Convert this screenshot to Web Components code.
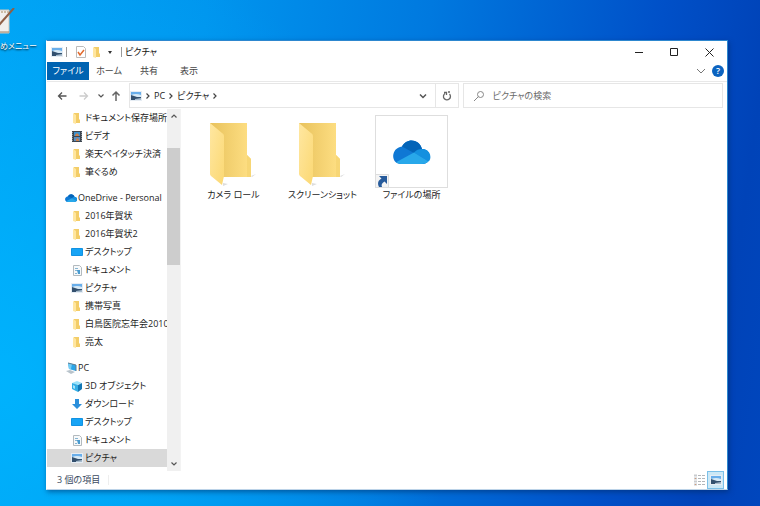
<!DOCTYPE html>
<html lang="ja">
<head>
<meta charset="utf-8">
<title>ピクチャ</title>
<style>
body { margin: 0; font: 9px/12px "Open Sans", "Noto Sans CJK JP", sans-serif; font-feature-settings: "palt"; color: #1c1c1c; }
</style>
</head>
<body>
<fe-desktop>
  <fe-shortcut slot="icons">めメニュー</fe-shortcut>
  <fe-window>
    <fe-titlebar slot="top">ピクチャ</fe-titlebar>
    <fe-ribbon slot="top"></fe-ribbon>
    <fe-addressbar slot="top"></fe-addressbar>
    <fe-tree slot="side">
      <fe-node icon="folder">ドキュメント保存場所変</fe-node>
      <fe-node icon="video">ビデオ</fe-node>
      <fe-node icon="folder">楽天ペイタッチ決済</fe-node>
      <fe-node icon="folder">筆ぐるめ</fe-node>
      <fe-node icon="cloud" root>OneDrive - Personal</fe-node>
      <fe-node icon="folder">2016年賀状</fe-node>
      <fe-node icon="folder">2016年賀状2</fe-node>
      <fe-node icon="desktop">デスクトップ</fe-node>
      <fe-node icon="doc">ドキュメント</fe-node>
      <fe-node icon="picture">ピクチャ</fe-node>
      <fe-node icon="folder">携帯写真</fe-node>
      <fe-node icon="folder">白鳥医院忘年会2010</fe-node>
      <fe-node icon="folder">亮太</fe-node>
      <fe-node icon="pc" root>PC</fe-node>
      <fe-node icon="cube">3D オブジェクト</fe-node>
      <fe-node icon="down">ダウンロード</fe-node>
      <fe-node icon="desktop">デスクトップ</fe-node>
      <fe-node icon="doc">ドキュメント</fe-node>
      <fe-node icon="picture" selected>ピクチャ</fe-node>
      <fe-node icon="video"></fe-node>
    </fe-tree>
    <fe-tile icon="bigfolder">カメラ ロール</fe-tile>
    <fe-tile icon="bigfolder">スクリーンショット</fe-tile>
    <fe-tile icon="bigcloud" framed>ファイルの場所</fe-tile>
    <fe-statusbar slot="bottom">3 個の項目</fe-statusbar>
  </fe-window>
</fe-desktop>

<script>
const picture = `<path d="M0 1h12v10H0z" fill="#e6edf4"/><path d="M1 2h10v4H1z" fill="#69aeea"/><path d="M1 5q5-2 10 0v2H1z" fill="#d6e9f6"/><path d="M1 5l3 1 3 1 4 0v3H1z" fill="#33506e"/><path d="M5 9l6-1v2H5z" fill="#a8bccd"/>`;
const cloud = `<path d="M8 24C-2.500 24-2.500 8 9 6.500 13-2 26-2 29 9c9-1 11 15 0 15z" fill="#0f78d4"/><path d="M9 6.500C13-2 26-2 29 9l-8 4z" fill="#0364b8"/><path d="M29 9c9 0 10 10 6.500 12.500L21 12.500C23 10 26 9 29 9z" fill="#1490df"/><path d="M3 22.300l18-9.800 14.500 9C34 23 32 24 29 24H8c-2 0-4-1-5-1.700z" fill="#28a8ea"/>`;
const ICONS = {
  picture: [12, 12, picture],
  folder: [12, 12, `<path d="M3 1h5v6l1 1v3H3z" fill="#f3cd68"/><path d="M2 1l3 2v9l-3-1z" fill="#ffe6a0"/>`],
  desktop: [12, 12, `<path d="M.5 2.500h11v7H.5z" fill="#18a4f5" stroke="#1292e2"/>`],
  doc: [12, 12, `<path d="M2.500 1.500h6l2 2v8h-8z" fill="#f7f9fa" stroke="#b3babe"/><path d="M4 4h3v1H4zM4 6h5v1H4zM4 9h2v1H4z" fill="#86b5d2"/><path d="M6 6h3v4H7z" fill="#4a9bd0"/>`],
  video: [12, 12, `<path d="M1 1h10v11H1z" fill="#3d4650"/><path d="M3 2h6v4H3z" fill="#3b91cf"/><path d="M3 7h6v4H3z" fill="#5b8fc0"/><path d="M4 5l2-2 2 2v1H4zM5 9l2-1 1 2v1H5z" fill="#c9804f"/><path d="M1.500 2v10M10.500 2v10" stroke="#8b949b" stroke-dasharray="1 1"/>`],
  cloud: [12, 12, `<g transform="translate(0 2) scale(.33)">${cloud}</g>`],
  pc: [12, 12, `<path d="M3 1l8 2v6L4 7z" fill="#2aa5e8"/><path d="M3 1l4 1-1 5-2 0z" fill="#75ccf4"/><path d="M1 9l4-1 5 2-4 2z" fill="#b8c3cb"/><path d="M3 1l8 2v6" fill="none" stroke="#5c7c92"/>`],
  cube: [12, 12, `<path d="M1 3l5-2 5 2-5 2z" fill="#9be3fa"/><path d="M1 3l6 2v7l-6-3z" fill="#34aee5"/><path d="M7 5l4-2v6l-4 3z" fill="#1478b5"/><path d="M2 5l2 1v3l-2-1z" fill="#a7e5fa"/>`],
  down: [12, 12, `<path d="M4 1h4v5h3l-5 5-5-5h3z" fill="#2b8fdb"/>`],
  check: [12, 12, `<path d="M1.500.5h7l2 2v9h-9z" fill="#fff" stroke="#bbb"/><path d="M3 6l2 3 4-5" fill="none" stroke="#e2692c" stroke-width="1.500"/>`],
  tri: [6, 12, `<path d="M1 5h4L3 8z" fill="#333"/>`],
  back: [10, 12, `<path d="M9.500 6h-8M5 2.500L1.500 6 5 9.500" fill="none" stroke="#555" stroke-width="1.300"/>`],
  fwd: [10, 12, `<path d="M.5 6h8M5 2.500L8.500 6 5 9.500" fill="none" stroke="#ccc" stroke-width="1.300"/>`],
  up: [10, 12, `<path d="M5 11V2M1.500 5.500L5 2l3.500 3.500" fill="none" stroke="#666" stroke-width="1.500"/>`],
  chev: [8, 12, `<path d="M1.500 4.500L4 7l2.500-2.500" fill="none" stroke="#555" stroke-width="1.200"/>`],
  chevbig: [10, 12, `<path d="M1 4l4 4 4-4" fill="none" stroke="#777"/>`],
  chevaddr: [8, 12, `<path d="M1 4.500L4 7.500l3-3" fill="none" stroke="#555" stroke-width="1.500"/>`],
  scup: [8, 12, `<path d="M1.500 7.500L4 5l2.500 2.500" fill="none" stroke="#555" stroke-width="1.200"/>`],
  right: [6, 12, `<path d="M1.500 3.500L4 6 1.500 8.500" fill="none" stroke="#444" stroke-width="1.200"/>`],
  refresh: [10, 12, `<path d="M3 3.500A3.500 3.500 0 1 0 7.500 4M2 2.500h2.500V5M6 2h2" fill="none" stroke="#666" stroke-width="1.300"/>`],
  search: [12, 12, `<circle cx="7.500" cy="4.500" r="3" fill="none" stroke="#888"/><path d="M5.500 6.500L1 11" stroke="#888"/>`],
  min: [9, 12, `<path d="M0 6.500h8" stroke="#222"/>`],
  max: [9, 12, `<path d="M.5 2.500h7v7h-7z" fill="none" stroke="#222"/>`],
  close: [9, 12, `<path d="M.5 2.500l8 8M8.500 2.500l-8 8" stroke="#222"/>`],
  list: [12, 12, `<path d="M1 1.500h3M1 4.500h3M1 7.500h3M1 10.500h3" stroke="#c9cccf" stroke-width="2"/><path d="M2 4h1v1H2zM2 10h1v1H2z" fill="#d59a76"/><path d="M5 1.500h3M9 1.500h3M5 4.500h3M9 4.500h3M5 7.500h3M9 7.500h3M5 10.500h3M9 10.500h3" stroke="#b2b6ba"/>`],
  bigfolder: [73, 73, `<defs><linearGradient id="b"><stop stop-color="#e8c25c"/><stop offset="1" stop-color="#ffe085"/></linearGradient><linearGradient id="f" y2="1"><stop stop-color="#ffe7a1"/><stop offset="1" stop-color="#fbd873"/></linearGradient></defs><path d="M54 61l5-2-4 3zM26 68l5 1-5 2z" fill="#ddd"/><path d="M13 8h37v32l4 4v18H20z" fill="url(#b)"/><path d="M50 40l4 4v18h-4z" fill="#f7d675"/><path d="M13 8l12 10q2 1 2 3v40l-2 9-11-9q-1-1-1-2z" fill="url(#f)"/>`],
  bigcloud: [73, 73, `<g transform="translate(18 25)">${cloud}</g><path d="M.5 59.500h13v13H.5z" fill="#f4f4f4" stroke="#ddd"/><path d="M4 61h8v8l-2.500-2.500C7 68 6 69.500 7 72H4c-2-4-.5-7 2.500-8.500z" fill="#275b9b"/>`],
};

const define = (name, css, html, setup) => {
  const template = document.createElement('template');
  template.innerHTML = `<style>
    *, :host { box-sizing: border-box; }
    button { font: inherit; font-feature-settings: inherit; color: inherit; background: none; border: 0; padding: 0; margin: 0; display: inline-flex; align-items: center; justify-content: center; }
    ${css}</style>${html}`;
  customElements.define(name, class extends HTMLElement {
    connectedCallback() {
      if (this.shadowRoot) return;
      this.attachShadow({ mode: 'open' }).append(template.content.cloneNode(true));
      if (setup) setup(this, this.shadowRoot);
    }
  });
};

const addIcon = (el, parent) => {
  const icon = document.createElement('fe-icon');
  icon.setAttribute('name', el.getAttribute('icon'));
  parent.prepend(icon);
};

define('fe-icon', ':host{display:block;flex:none} svg{display:block}', '<div></div>', (el, root) => {
  const [w, h, body] = ICONS[el.getAttribute('name')];
  root.querySelector('div').innerHTML = `<svg width="${w}" height="${h}" viewBox="0 0 ${w} ${h}" aria-hidden="true">${body}</svg>`;
});

define('fe-desktop', `
  :host { display: flex; position: relative; height: 100vh; overflow: hidden; padding: 40px 32px 16px 46px;
    background: radial-gradient(ellipse 60% 90% at 0% 75%, #00b7ffcc, #00aaff00), linear-gradient(98deg, #00a2f4 0%, #0095ee 25%, #0079df 52%, #0050c8 80%, #0043b8 93%, #0046bd 100%); }
  `, '<slot name="icons"></slot><slot></slot>');

define('fe-shortcut', `
  :host { position: absolute; left: 0; top: 8px; color: #fff; text-shadow: 0 1px 2px #000; }
  svg { display: block; margin-left: -10px; } span { display: block; margin-top: 4px; white-space: nowrap; font-size: 8px; }
  `, `<svg width="26" height="28" viewBox="0 0 26 28" aria-hidden="true"><path d="M2 2h17v23H2z" fill="#f1efec" stroke="#cfc6b8"/><path d="M2 4h17" stroke="#cdbda6" stroke-width="2" stroke-dasharray="2 1"/><path d="M2 24h17" stroke="#9c8368"/><path d="M24 0L9 17" stroke="#8f5f45" stroke-width="2"/><path d="M9 17l-3 4" stroke="#222"/></svg><span><slot></slot></span>`);

define('fe-window', `
  :host { display: flex; flex-direction: column; flex: 1; min-width: 0; background: #fff; border: 1px solid #2d87cf; border-left-color: #fff; border-bottom-color: #bcd3e8; box-shadow: 1px 2px 5px #00286088; }
  .body { flex: 1; display: flex; min-height: 0; padding-top: 1px; }
  main { flex: 1; display: flex; flex-wrap: wrap; align-content: flex-start; gap: 16px; padding: 6px 16px; }
  `, '<slot name="top"></slot><div class="body"><slot name="side"></slot><main><slot></slot></main></div><slot name="bottom"></slot>');

define('fe-titlebar', `
  :host { display: flex; align-items: center; height: 21px; padding-left: 4px; }
  .sep { width: 1px; height: 10px; background: #999; }
  .quick { display: flex; gap: 4px; margin: 0 8px; align-items: center; }
  .name { margin-left: 3px; color: #111; }
  .controls { margin-left: auto; display: flex; } .controls button { width: 35px; height: 20px; }
  fe-icon.p { margin-right: 3px; }
  `, `<fe-icon class="p" name="picture"></fe-icon><i class="sep"></i>
  <div class="quick"><button aria-label="プロパティ"><fe-icon name="check"></fe-icon></button><button aria-label="新しいフォルダー"><fe-icon name="folder"></fe-icon></button><button aria-label="カスタマイズ"><fe-icon name="tri"></fe-icon></button></div>
  <i class="sep"></i><span class="name"><slot></slot></span>
  <div class="controls"><button aria-label="最小化"><fe-icon name="min"></fe-icon></button><button aria-label="最大化"><fe-icon name="max"></fe-icon></button><button aria-label="閉じる"><fe-icon name="close"></fe-icon></button></div>`);

define('fe-ribbon', `
  :host { display: flex; align-items: center; border-bottom: 1px solid #e8e8e8; height: 20px; padding: 0 3px 2px 0; color: #444; }
  button { width: 40px; height: 18px; } .file { width: 42px; background: #0063b1; color: #fff; }
  .right { margin-left: auto; display: flex; gap: 6px; align-items: center; }
  .right button { width: auto; }
  .help { width: 12px; height: 12px; line-height: 12px; border-radius: 50%; background: #0b63c0; color: #fff; font-weight: 600; text-align: center; }
  `, `<button class="file">ファイル</button><button>ホーム</button><button>共有</button><button>表示</button>
  <div class="right"><button aria-label="リボンの展開"><fe-icon name="chevbig"></fe-icon></button><button aria-label="ヘルプ"><span class="help">?</span></button></div>`);

define('fe-addressbar', `
  :host { display: flex; padding: 1px 4px 0 10px; height: 26px; }
  nav { display: flex; gap: 12px; align-items: center; width: 72px; }
  nav .n { margin: 0 -2px 0 -4px; }
  .boxes { flex: 1; display: grid; grid-template-columns: 329fr 260fr; gap: 4px; }
  .box { display: flex; align-items: center; border: 1px solid #e6e6e6; min-width: 0; }
  .crumbs { flex: 1; display: flex; align-items: center; gap: 3px; }
  .drop { width: 24px; } .ref { width: 23px; align-self: stretch; border-left: 1px solid #e6e6e6; }
  .search { padding-left: 9px; gap: 8px; }
  input { flex: 1; min-width: 0; border: 0; padding: 0; outline: 0; background: none; font: inherit; font-feature-settings: inherit; color: #666; height: 16px; }
  input::placeholder { color: #6a6a6a; opacity: 1; }
  `, `<nav aria-label="移動"><button aria-label="戻る"><fe-icon name="back"></fe-icon></button><button aria-label="進む"><fe-icon name="fwd"></fe-icon></button><button class="n" aria-label="履歴"><fe-icon name="chev"></fe-icon></button><button class="n" aria-label="上へ"><fe-icon name="up"></fe-icon></button></nav>
  <div class="boxes"><div class="box"><div class="crumbs"><fe-icon name="picture"></fe-icon><fe-icon name="right"></fe-icon><button>PC</button><fe-icon name="right"></fe-icon><button>ピクチャ</button><fe-icon name="right"></fe-icon></div>
  <button class="drop" aria-label="以前の場所"><fe-icon name="chevaddr"></fe-icon></button><button class="ref" aria-label="更新"><fe-icon name="refresh"></fe-icon></button></div>
  <label class="box search"><fe-icon name="search"></fe-icon><input type="text" aria-label="検索" placeholder="ピクチャの検索"></label></div>`);

define('fe-tree', `
  :host { display: flex; width: 134px; flex: none; border-right: 1px solid #f3f3f3; }
  .items { flex: 1; min-width: 0; overflow: hidden; }
  .bar { width: 13px; display: flex; flex-direction: column; align-items: center; background: #f0f0f0; }
  .bar button { height: 14px; } .thumb { width: 100%; flex: 117; background: #cdcdcd; }
  .a { flex: 25; } .z { flex: 192; }
  `, `<div class="items"><slot></slot></div><div class="bar"><button aria-label="上へスクロール"><fe-icon name="scup"></fe-icon></button><i class="a"></i><div class="thumb"></div><i class="z"></i><button aria-label="下へスクロール"><fe-icon name="chev"></fe-icon></button></div>`);

define('fe-node', `
  :host { display: flex; align-items: center; gap: 2px; height: 18px; padding-left: 24px; white-space: nowrap; }
  :host([root]) { padding-left: 18px; gap: 1px; margin-top: 8px; }
  :host([selected]) { background: #d9d9d9; }
  `, '<span><slot></slot></span>', addIcon);

define('fe-tile', `
  :host { display: flex; flex-direction: column; align-items: center; width: 73px; gap: 1px; white-space: nowrap; }
  .art { width: 100%; }
  :host([framed]) .art { outline: 1px solid #dedede; outline-offset: -1px; }
  `, '<div class="art"></div><span><slot></slot></span>', (el, root) => addIcon(el, root.querySelector('.art')));

define('fe-statusbar', `
  :host { display: flex; align-items: center; height: 18px; padding: 0 3px 0 10px; color: #3a4a60; }
  .info { padding-right: 8px; border-right: 1px solid #eee; line-height: 10px; }
  .views { margin-left: auto; display: flex; }
  button { width: 17px; height: 18px; } .on { background: #cce8f6; border: 1px solid #7cc0e8; }
  `, `<span class="info"><slot></slot></span><div class="views"><button aria-label="詳細"><fe-icon name="list"></fe-icon></button><button class="on" aria-label="大アイコン"><fe-icon name="picture"></fe-icon></button></div>`);
</script>
</body>
</html>
